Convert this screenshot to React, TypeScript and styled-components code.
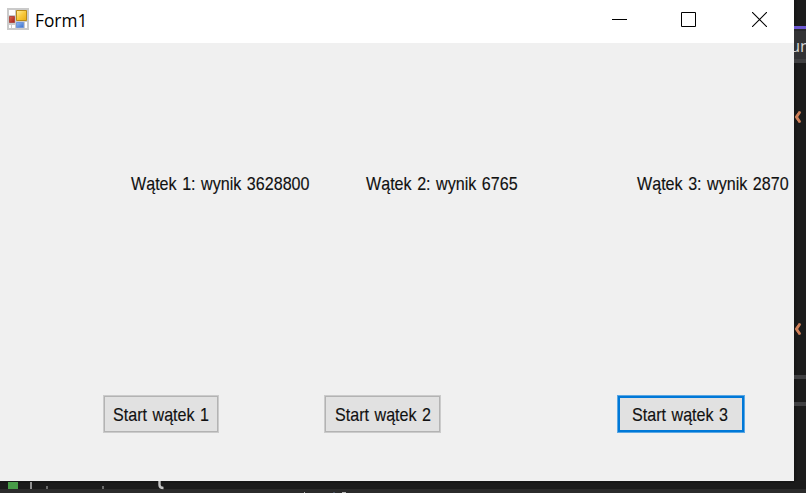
import React from "react";
import styled, { createGlobalStyle } from "styled-components";

const GlobalStyle = createGlobalStyle`
  * { box-sizing: border-box; }
  body { margin: 0; background: #1b1b1b; overflow: hidden; }
`;

const Desktop = styled.div`
  display: grid;
  grid-template-columns: 794px 12px;
  grid-template-rows: 481px 12px;
  width: 806px;
  height: 493px;
  overflow: hidden;
  background: #1b1b1b;
`;

const FormWindow = styled.main`
  display: flex;
  flex-direction: column;
  background: #f0f0f0;
  overflow: hidden;
`;

const TitleBar = styled.header`
  display: flex;
  align-items: flex-start;
  height: 43px;
  flex: none;
  padding-left: 7px;
  background: #fff;
`;

const AppIcon = styled.svg`
  margin-top: 8px;
  flex: none;
`;

const Title = styled.h1`
  margin: 0 auto 0 6px;
  font: 400 17.3px/24px "Open Sans", sans-serif;
  padding-top: 9px;
  color: #000;
`;

const CaptionButton = styled.button<{ $width: number }>`
  display: flex;
  justify-content: flex-start;
  align-items: flex-start;
  width: ${(p) => p.$width}px;
  height: 42px;
  padding: 12px 0 0;
  border: 0;
  background: transparent;
`;

const Client = styled.section`
  display: flex;
  flex-direction: column;
  flex: 1;
`;

const ResultRow = styled.div`
  display: flex;
  margin-top: 128px;
  height: 26px;
  padding-left: 131px;
`;

const Caption = styled.span`
  display: block;
  flex: none;
  font: 400 18.5px/26px "Liberation Sans", Arial, sans-serif;
  word-spacing: 1.2px;
  white-space: nowrap;
  color: #111;
  -webkit-text-stroke: 0.15px #111;
  transform: scaleX(0.87);
  transform-origin: left center;
`;

const ResultSlot = styled.div<{ $width: number }>`
  flex: none;
  width: ${(p) => p.$width}px;
`;

const ButtonRow = styled.div`
  display: flex;
  margin-top: 198px;
  padding-left: 103px;
`;

const StartButton = styled.button<{ $width: number; $gap: number; $inset: number; $focused?: boolean }>`
  display: flex;
  flex: none;
  align-items: center;
  width: ${(p) => p.$width}px;
  height: 38px;
  margin-right: ${(p) => p.$gap}px;
  padding: 2px 0 0 ${(p) => p.$inset}px;
  border: 0;
  background: #e1e1e1;
  box-shadow: ${(p) =>
    p.$focused
      ? "inset 0 0 0 1px #5aa7e4, inset 0 0 0 3px #0078d7"
      : "inset 0 0 0 1px #cbcbcb, inset 0 0 0 2px #b3b3b3"};
`;

const SideStrip = styled.aside`
  display: flex;
  flex-direction: column;
  overflow: hidden;
  background: linear-gradient(90deg, #151515, #1c1c1c 4px);
`;

const Band = styled.div<{ $height: number; $color?: string }>`
  flex: none;
  height: ${(p) => p.$height}px;
  background: ${(p) => p.$color || "transparent"};
`;

const Tab = styled(Band)`
  display: flex;
  justify-content: center;
  overflow: hidden;
  font: 16.5px/30px "Open Sans", sans-serif;
  color: #d6d6d6;
`;

const Brace = styled.svg`
  display: block;
  flex: none;
`;

const BottomStrip = styled.footer`
  grid-column: 1 / 3;
  background: #1b1b1b;
`;

const results = [
  { text: "Wątek 1: wynik 3628800", slot: 235 },
  { text: "Wątek 2: wynik 6765", slot: 270.5 },
  { text: "Wątek 3: wynik 2870", slot: 152 },
];

const buttons = [
  { text: "Start wątek 1", width: 116, gap: 105, inset: 10 },
  { text: "Start wątek 2", width: 117, gap: 176, inset: 11 },
  { text: "Start wątek 3", width: 128, gap: 0, inset: 15, focused: true },
];

const CodeBrace = () => (
  <Brace width="12" height="12" viewBox="0 0 12 12" fill="none">
    <path d="M6.5.5H5.300L1.500 5.500v1l3.800 5h1.200" stroke="#9c6a52" />
    <path d="M6 .8 2.500 6 6 11.200" stroke="#cf8059" strokeWidth="2.8" />
  </Brace>
);

export default function App() {
  return (
    <>
      <GlobalStyle />
      <Desktop>
        <FormWindow>
          <TitleBar>
            <AppIcon width="22" height="22" viewBox="0 0 22 22">
              <defs>
                <linearGradient id="gold" x2="1" y2="1">
                  <stop stopColor="#fff0a0" />
                  <stop offset=".5" stopColor="#f8c93c" />
                  <stop offset="1" stopColor="#e8ad13" />
                </linearGradient>
                <linearGradient id="red" x2="1" y2="1">
                  <stop stopColor="#da6653" />
                  <stop offset="1" stopColor="#a81e15" />
                </linearGradient>
                <linearGradient id="blue" x2="1" y2="1">
                  <stop stopColor="#91b8f5" />
                  <stop offset="1" stopColor="#3c71cb" />
                </linearGradient>
              </defs>
              <path fill="#cacaca" d="M0 0h22v22H0z" />
              <path fill="#fff" d="M2 2h6v5H2zM2 17h2v3H2zM5 17h3v3H5zM18 14h2v6h-2z" />
              <path fill="url(#gold)" stroke="#b98b16" d="M9.500 2.500h10v10h-10z" />
              <path fill="url(#red)" stroke="#b04b42" d="M2.500 8.500h5v6h-5z" />
              <path fill="url(#blue)" stroke="#6f96db" d="M9.500 14.500h7v5h-7z" />
            </AppIcon>
            <Title>Form1</Title>
            <CaptionButton $width={69} aria-label="Minimize">
              <svg width="15" height="15" viewBox="0 0 15 15"><path d="M0 7.500h15" stroke="#000" /></svg>
            </CaptionButton>
            <CaptionButton $width={71} aria-label="Maximize">
              <svg width="15" height="15" viewBox="0 0 15 15" fill="none"><path d="M.5.5h14v14H.5z" stroke="#000" /></svg>
            </CaptionButton>
            <CaptionButton $width={42} aria-label="Close">
              <svg width="15" height="15" viewBox="0 0 15 15"><path d="m0 0 15 15M15 0 0 15" stroke="#000" strokeWidth="1.1" /></svg>
            </CaptionButton>
          </TitleBar>
          <Client>
            <ResultRow>
              {results.map((r) => (
                <ResultSlot key={r.text} $width={r.slot}>
                  <Caption>{r.text}</Caption>
                </ResultSlot>
              ))}
            </ResultRow>
            <ButtonRow>
              {buttons.map((b) => (
                <StartButton key={b.text} $width={b.width} $gap={b.gap} $inset={b.inset} $focused={b.focused}>
                  <Caption>{b.text}</Caption>
                </StartButton>
              ))}
            </ButtonRow>
          </Client>
        </FormWindow>
        <SideStrip>
          <Band $height={26} />
          <Band $height={3} $color="#6b57d2" />
          <Band $height={2} $color="#29292b" />
          <Tab $height={28} $color="#333335">un</Tab>
          <Band $height={4} $color="#404042" />
          <Band $height={48} />
          <CodeBrace />
          <Band $height={200} />
          <CodeBrace />
          <Band $height={40} />
          <Band $height={4} $color="#404042" />
          <Band $height={23} />
          <Band $height={4} $color="#404042" />
        </SideStrip>
        <BottomStrip>
          <svg width="806" height="12" viewBox="0 0 806 12" display="block">
            <path fill="#171717" d="M0 0h795v2H0z" />
            <path fill="#2b2b2b" d="M0 8h806v4H0z" />
            <path fill="#489c48" d="M8 1h10v7H8z" />
            <path fill="#929292" d="M30 1h2v7h-2z" />
            <path fill="#6a6a6a" d="M46 5h2v3h-2zM102 5h2v3h-2z" />
            <path fill="none" stroke="#c4c4c4" strokeWidth="2.4" d="M159.500 0v4q0 3 4 3" />
            <path fill="#b4b4b4" d="M304 11h1v1h-1zM342 11h4v1h-4z" />
            <path fill="#4a5363" d="M333 11h2v1h-2z" />
          </svg>
        </BottomStrip>
      </Desktop>
    </>
  );
}
